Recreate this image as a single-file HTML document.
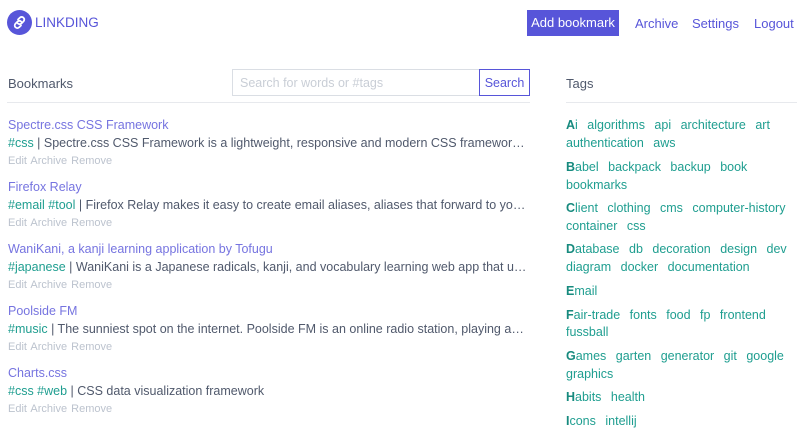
<!DOCTYPE html>
<html><head><style>
*{margin:0;padding:0;box-sizing:border-box}
body{width:800px;height:429px;overflow:hidden;background:#fff;font-family:"Liberation Sans",sans-serif;font-size:12.5px;color:#50596c;position:relative}
.a{position:absolute;white-space:nowrap}
.p{color:#5755d9}
.t{color:#7674e0}
.g{color:#1f9e90}
.m{color:#bcc3ce;font-size:11px;word-spacing:1px}
.d{width:520px;overflow:hidden;text-overflow:ellipsis}
.tl{position:absolute;left:566px;white-space:nowrap;color:#1f9e90;word-spacing:6px}
.tl b{color:#178a7e}
</style></head><body>
<svg class="a" style="left:7px;top:10px" width="25" height="25" viewBox="0 0 25 25"><circle cx="12.5" cy="12.5" r="12.5" fill="#5755d9"/><g fill="none" stroke="#fff" stroke-width="1.8" stroke-linecap="round"><path d="M11 9.5l1.8-1.8a2.6 2.6 0 0 1 3.7 3.7l-2 2a2.6 2.6 0 0 1-3.7 0"/><path d="M14 15.5l-1.8 1.8a2.6 2.6 0 0 1-3.7-3.7l2-2a2.6 2.6 0 0 1 3.7 0"/></g></svg>
<div class="a p" style="left:35px;top:15px;font-size:13.5px">LINKDING</div>
<div class="a" style="left:527px;top:10px;width:92px;height:26px;background:#5755d9;color:#fff;text-align:center;line-height:26px;font-size:13px">Add bookmark</div>
<div class="a p" style="left:635px;top:16px;font-size:13px">Archive</div>
<div class="a p" style="left:692px;top:16px;font-size:13px">Settings</div>
<div class="a p" style="left:754px;top:16px;font-size:13px">Logout</div>
<div class="a" style="left:8px;top:76px;font-size:13px">Bookmarks</div>
<div class="a" style="left:232px;top:69px;width:248px;height:27px;border:1px solid #dadee4;color:#c9ced6;padding:6px 7px">Search for words or #tags</div>
<div class="a p" style="left:479px;top:69px;width:51px;height:27px;border:1px solid #5755d9;padding:6px 0;text-align:center;font-size:12.5px">Search</div>
<div class="a" style="left:7px;top:102px;width:523px;height:1px;background:#e7e9ed"></div>
<div class="a" style="left:566px;top:76px;font-size:13px">Tags</div>
<div class="a" style="left:566px;top:102px;width:231px;height:1px;background:#e7e9ed"></div>

<div class="a t" style="left:8px;top:118px">Spectre.css CSS Framework</div>
<div class="a d" style="left:8px;top:136px"><span class="g">#css</span> | Spectre.css CSS Framework is a lightweight, responsive and modern CSS framework for faster and extensible development</div>
<div class="a m" style="left:8px;top:155px">Edit Archive Remove</div>

<div class="a t" style="left:8px;top:180px">Firefox Relay</div>
<div class="a d" style="left:8px;top:198px"><span class="g">#email #tool</span> | Firefox Relay makes it easy to create email aliases, aliases that forward to your real inbox</div>
<div class="a m" style="left:8px;top:217px">Edit Archive Remove</div>

<div class="a t" style="left:8px;top:242px">WaniKani, a kanji learning application by Tofugu</div>
<div class="a d" style="left:8px;top:260px"><span class="g">#japanese</span> | WaniKani is a Japanese radicals, kanji, and vocabulary learning web app that uses mnemonics</div>
<div class="a m" style="left:8px;top:279px">Edit Archive Remove</div>

<div class="a t" style="left:8px;top:304px">Poolside FM</div>
<div class="a d" style="left:8px;top:322px"><span class="g">#music</span> | The sunniest spot on the internet. Poolside FM is an online radio station, playing an incredible mix</div>
<div class="a m" style="left:8px;top:341px">Edit Archive Remove</div>

<div class="a t" style="left:8px;top:366px">Charts.css</div>
<div class="a d" style="left:8px;top:384px"><span class="g">#css #web</span> | CSS data visualization framework</div>
<div class="a m" style="left:8px;top:403px">Edit Archive Remove</div>

<div class="tl" style="top:118px"><b>A</b>i algorithms api architecture art</div>
<div class="tl" style="top:136px">authentication aws</div>
<div class="tl" style="top:160px"><b>B</b>abel backpack backup book</div>
<div class="tl" style="top:178px">bookmarks</div>
<div class="tl" style="top:201px"><b>C</b>lient clothing cms computer-history</div>
<div class="tl" style="top:219px">container css</div>
<div class="tl" style="top:242px"><b>D</b>atabase db decoration design dev</div>
<div class="tl" style="top:260px">diagram docker documentation</div>
<div class="tl" style="top:284px"><b>E</b>mail</div>
<div class="tl" style="top:308px"><b>F</b>air-trade fonts food fp frontend</div>
<div class="tl" style="top:325px">fussball</div>
<div class="tl" style="top:349px"><b>G</b>ames garten generator git google</div>
<div class="tl" style="top:367px">graphics</div>
<div class="tl" style="top:390px"><b>H</b>abits health</div>
<div class="tl" style="top:414px"><b>I</b>cons intellij</div>
</body></html>
